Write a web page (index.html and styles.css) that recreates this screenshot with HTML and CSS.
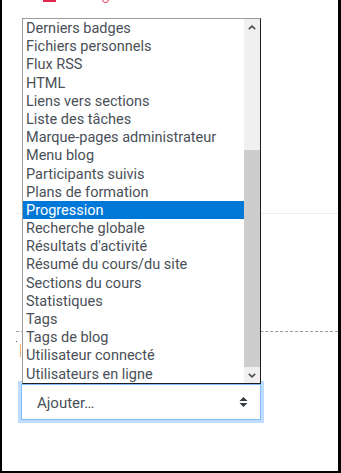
FILE: index.html
```html
<!DOCTYPE html>
<html lang="fr">
<head>
<meta charset="utf-8">
<title>Ajouter un bloc</title>
<link rel="stylesheet" href="styles.css">
</head>
<body>
<div class="frame">
  <div class="marks">
    <span class="mark-bar"></span>
    <span class="mark-arc"></span>
  </div>
  <div class="sep-light"></div>
  <div class="sep-dashed"></div>
  <div class="bits">
    <span class="bit-dot"></span>
    <span class="bit-orange"></span>
  </div>
  <div class="select-wrap">
    <div class="select">
      <span class="select-text">Ajouter…</span>
      <svg class="select-arrows" width="9" height="10" viewBox="0 0 9 10"><path d="M0.5 4 L4.5 0 L8.5 4 Z M0.5 6 L4.5 10 L8.5 6 Z" fill="#343a40"/></svg>
    </div>
  </div>

  <div class="popup">
    <ul class="options">
      <li>Derniers badges</li>
      <li>Fichiers personnels</li>
      <li>Flux RSS</li>
      <li>HTML</li>
      <li>Liens vers sections</li>
      <li>Liste des tâches</li>
      <li>Marque-pages administrateur</li>
      <li>Menu blog</li>
      <li>Participants suivis</li>
      <li>Plans de formation</li>
      <li class="selected">Progression</li>
      <li>Recherche globale</li>
      <li>Résultats d'activité</li>
      <li>Résumé du cours/du site</li>
      <li>Sections du cours</li>
      <li>Statistiques</li>
      <li>Tags</li>
      <li>Tags de blog</li>
      <li>Utilisateur connecté</li>
      <li>Utilisateurs en ligne</li>
    </ul>
    <div class="scrollbar">
      <div class="sb-btn">
        <svg width="8" height="5" viewBox="0 0 8 5"><path d="M0.8 4.2 L4 1.2 L7.2 4.2" fill="none" stroke="#505050" stroke-width="1.6"/></svg>
      </div>
      <div class="sb-track">
        <div class="sb-thumb"></div>
      </div>
      <div class="sb-btn">
        <svg width="8" height="5" viewBox="0 0 8 5"><path d="M0.8 0.8 L4 3.8 L7.2 0.8" fill="none" stroke="#505050" stroke-width="1.6"/></svg>
      </div>
    </div>
  </div>
</div>
</body>
</html>
```

FILE: styles.css
```css
* { box-sizing: border-box; }

html, body {
  margin: 0;
  padding: 0;
  background: #fff;
}

.frame {
  position: relative;
  width: 341px;
  height: 473px;
  border-left: 2px solid #000;
  border-right: 3px solid #000;
  border-bottom: 2px solid #000;
  background: #fff;
  font-family: Roboto, "Liberation Sans", Arial, sans-serif;
  overflow: hidden;
}

.marks {
  display: flex;
  align-items: flex-start;
  height: 3px;
}

.mark-bar {
  display: block;
  width: 13px;
  height: 2px;
  margin-left: 41px;
  background: #e0284f;
}

.mark-arc {
  display: block;
  width: 7px;
  height: 7px;
  margin-left: 46px;
  margin-top: -4px;
  border: 1.5px solid #e0284f;
  border-radius: 50%;
}

.sep-light {
  margin-top: 210px;
  margin-left: 14px;
  border-top: 1px solid #ececec;
}

.sep-dashed {
  margin-top: 117px;
  margin-left: 14px;
  border-top: 1px dashed #9a9a9a;
}

.bits {
  position: relative;
  height: 52px;
}

.bit-dot {
  position: absolute;
  left: 14px;
  top: 9px;
  width: 1px;
  height: 1px;
  background: #555;
}

.bit-orange {
  position: absolute;
  left: 18px;
  top: 12px;
  width: 1px;
  height: 13px;
  background: #f3b27a;
}

.select-wrap {
  padding-left: 19px;
}

.select {
  display: flex;
  align-items: center;
  justify-content: space-between;
  width: 240px;
  height: 36px;
  padding: 0 12px 0 15px;
  border: 1px solid #80bdff;
  box-shadow: 0 0 0 3px rgba(0, 123, 255, 0.25);
  background: #fff;
  color: #495057;
  font-size: 15px;
}

.select-text {
  padding-top: 1px;
}

.select-arrows {
  display: block;
}

.popup {
  position: absolute;
  top: 18px;
  left: 20px;
  width: 239px;
  height: 366px;
  display: flex;
  border-top: 1px solid #9c9c9c;
  border-left: 1px solid #9c9c9c;
  border-right: 1px solid #1e1e1e;
  border-bottom: 1px solid #1e1e1e;
  background: #fff;
  z-index: 2;
}

.options {
  list-style: none;
  margin: 0;
  padding: 0;
  flex: 1;
  min-width: 0;
}

.options li {
  height: 18.2px;
  line-height: 17.2px;
  padding-top: 1px;
  padding-left: 3px;
  font-size: 14.5px;
  color: #495057;
  white-space: nowrap;
  overflow: hidden;
}

.options li.selected {
  background: #0078d7;
  color: #fff;
}

.scrollbar {
  width: 16px;
  display: flex;
  flex-direction: column;
  background: #f0f0f0;
}

.sb-btn {
  height: 16px;
  display: flex;
  align-items: center;
  justify-content: center;
  flex: none;
}

.sb-track {
  flex: 1;
  padding-top: 115px;
}

.sb-thumb {
  height: 217px;
  background: #cdcdcd;
}
```
